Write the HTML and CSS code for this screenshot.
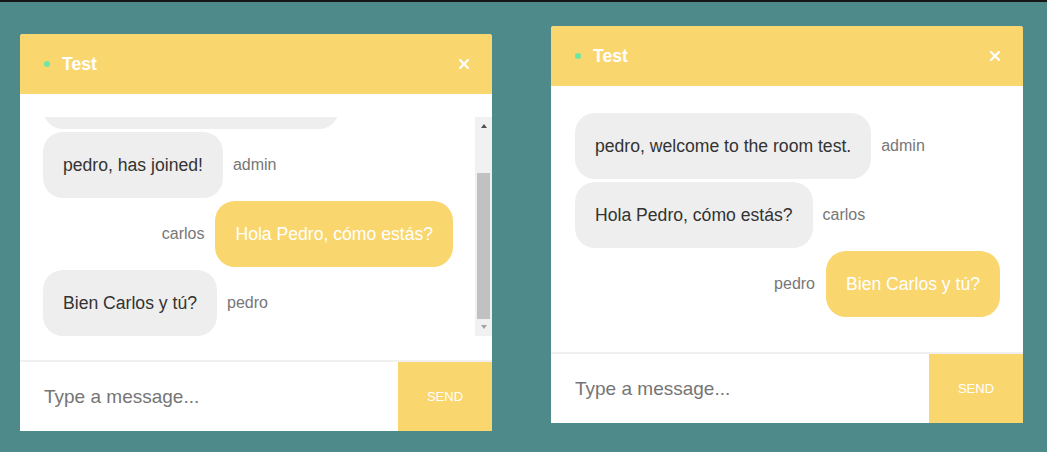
FILE: index.html
```html
<!DOCTYPE html>
<html lang="en">
<head>
<meta charset="utf-8">
<title>Chat</title>
<link rel="stylesheet" href="styles.css">
</head>
<body>
<main class="desk">
  <section class="chat chat--left">
    <header class="chat-head">
      <span class="dot"></span>
      <span class="title">Test</span>
      <svg class="close" width="10" height="10" viewBox="0 0 10 10"><path d="M1 1L9 9M9 1L1 9" stroke="#fff" stroke-width="2.2" stroke-linecap="square"/></svg>
    </header>
    <div class="chat-body">
      <div class="scroll scroll--stick">
        <ul class="msgs">
          <li class="msg"><p class="bubble">pedro, welcome to the room test.</p><span class="who">admin</span></li>
          <li class="msg"><p class="bubble">pedro, has joined!</p><span class="who">admin</span></li>
          <li class="msg msg--own"><span class="who">carlos</span><p class="bubble">Hola Pedro, cómo estás?</p></li>
          <li class="msg"><p class="bubble">Bien Carlos y tú?</p><span class="who">pedro</span></li>
        </ul>
      </div>
      <div class="sbar" aria-hidden="true">
        <span class="sbar-btn"><span class="arrow-up"></span></span>
        <span class="sbar-track"><span class="sbar-thumb"></span></span>
        <span class="sbar-btn"><span class="arrow-down"></span></span>
      </div>
    </div>
    <form class="composer">
      <input class="composer-input" type="text" placeholder="Type a message...">
      <button class="composer-send" type="button">SEND</button>
    </form>
  </section>

  <section class="chat chat--right">
    <header class="chat-head">
      <span class="dot"></span>
      <span class="title">Test</span>
      <svg class="close" width="10" height="10" viewBox="0 0 10 10"><path d="M1 1L9 9M9 1L1 9" stroke="#fff" stroke-width="2.2" stroke-linecap="square"/></svg>
    </header>
    <div class="chat-body">
      <div class="scroll">
        <ul class="msgs">
          <li class="msg"><p class="bubble">pedro, welcome to the room test.</p><span class="who">admin</span></li>
          <li class="msg"><p class="bubble">Hola Pedro, cómo estás?</p><span class="who">carlos</span></li>
          <li class="msg msg--own"><span class="who">pedro</span><p class="bubble">Bien Carlos y tú?</p></li>
        </ul>
      </div>
    </div>
    <form class="composer">
      <input class="composer-input" type="text" placeholder="Type a message...">
      <button class="composer-send" type="button">SEND</button>
    </form>
  </section>
</main>
</body>
</html>
```

FILE: styles.css
```css
* { box-sizing: border-box; }

html, body {
  margin: 0;
  padding: 0;
}

body {
  background: #4e8a89;
  border-top: 2px solid #161616;
  font-family: "Liberation Sans", Arial, sans-serif;
  height: 452px;
  overflow: hidden;
}

.desk {
  display: flex;
  align-items: flex-start;
  padding-left: 20px;
  gap: 59px;
}

.chat {
  width: 472px;
  background: #fff;
  border-radius: 3px 3px 0 0;
  display: flex;
  flex-direction: column;
}

.chat--left { margin-top: 32px; }
.chat--right { margin-top: 24px; }

.chat-head {
  height: 60px;
  background: #fad66f;
  border-radius: 3px 3px 0 0;
  display: flex;
  align-items: center;
  padding: 0 23px 0 24px;
}

.dot {
  width: 6px;
  height: 6px;
  border-radius: 50%;
  background: #6ee7a6;
  margin-right: 12px;
}

.title {
  flex: 1;
  color: #fff;
  font-weight: bold;
  font-size: 17.6px;
}

.close { display: block; }

.chat-body {
  height: 266px;
  padding: 23px 0 24px 23px;
  display: flex;
}

.chat--right .chat-body { padding-left: 24px; }

.scroll {
  flex: 1;
  min-width: 0;
  height: 219px;
  padding-right: 23px;
  overflow: hidden;
}

.scroll--stick {
  display: flex;
  flex-direction: column-reverse;
  padding-right: 22px;
}

.sbar {
  width: 17px;
  height: 219px;
  background: #f1f1f1;
  display: flex;
  flex-direction: column;
}

.sbar-btn {
  height: 17px;
  display: flex;
  justify-content: center;
}

.arrow-up {
  margin-top: 7px;
  width: 0;
  height: 0;
  border-left: 3.5px solid transparent;
  border-right: 3.5px solid transparent;
  border-bottom: 4px solid #505050;
}

.arrow-down {
  margin-top: 6px;
  width: 0;
  height: 0;
  border-left: 3.5px solid transparent;
  border-right: 3.5px solid transparent;
  border-top: 4px solid #a3a3a3;
}

.sbar-track {
  flex: 1;
  display: flex;
  flex-direction: column;
  justify-content: flex-end;
  padding: 0 2px;
}

.sbar-thumb {
  height: 146px;
  background: #c1c1c1;
}

.msgs {
  list-style: none;
  margin: 0;
  padding: 4px 0 0;
  display: flex;
  flex-direction: column;
  gap: 3px;
  flex-shrink: 0;
}

.msg {
  display: flex;
  align-items: center;
  gap: 10px;
}

.msg--own { justify-content: flex-end; gap: 11px; }

.bubble {
  margin: 0;
  background: #eeeeee;
  color: #333;
  font-size: 17.6px;
  line-height: 20px;
  padding: 23px 20px;
  border-radius: 20px;
  white-space: nowrap;
}

.msg--own .bubble {
  background: #fad66f;
  color: #fff;
}

.who {
  color: #777;
  font-size: 16px;
}

.composer {
  margin: 0;
  border-top: 2px solid #f0f0f0;
  height: 71px;
  display: flex;
}

.composer-input {
  flex: 1;
  min-width: 0;
  border: none;
  outline: none;
  padding: 0 0 0 24px;
  font-family: inherit;
  font-size: 19px;
  color: #333;
  background: #fff;
}

.composer-input::placeholder { color: #757575; }

.composer-send {
  width: 94px;
  border: none;
  background: #fad66f;
  color: #fff;
  font-family: inherit;
  font-size: 13px;
  padding: 0;
}
```
